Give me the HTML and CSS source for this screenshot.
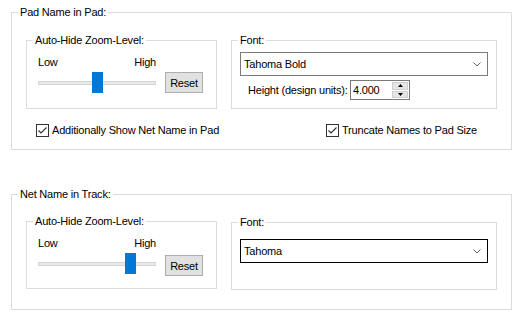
FILE: index.html
```html
<!DOCTYPE html>
<html lang="en">
<head>
    <meta charset="UTF-8">
    <title>Net Name Options</title>
    <link rel="stylesheet" href="styles.css">
</head>
<body>
    <fieldset class="group group-pad">
        <legend>Pad Name in Pad:</legend>
        <div class="group-row">
            <fieldset class="sub zoom">
                <legend>Auto-Hide Zoom-Level:</legend>
                <div class="zoom-body">
                    <div class="slider">
                        <div class="slider-labels"><span>Low</span><span>High</span></div>
                        <div class="slider-area">
                            <div class="track"></div>
                            <div class="thumb" style="left: 54px;"></div>
                        </div>
                    </div>
                    <button class="btn">Reset</button>
                </div>
            </fieldset>
            <fieldset class="sub font">
                <legend>Font:</legend>
                <div class="combo">
                    <span>Tahoma Bold</span>
                    <svg class="chevron" width="8" height="5" viewBox="0 0 8 5"><polyline points="0.5,0.5 4,4 7.5,0.5" fill="none" stroke="#606060" stroke-width="1"/></svg>
                </div>
                <div class="height-row">
                    <label>Height (design units):</label>
                    <div class="spin">
                        <span class="spin-value">4.000</span>
                        <div class="spin-btns">
                            <span class="spin-btn"><svg width="5" height="3" viewBox="0 0 5 3"><polygon points="2.5,0 5,3 0,3" fill="#000"/></svg></span>
                            <span class="spin-btn"><svg width="5" height="3" viewBox="0 0 5 3"><polygon points="0,0 5,0 2.5,3" fill="#000"/></svg></span>
                        </div>
                    </div>
                </div>
            </fieldset>
        </div>
        <div class="check-row">
            <label class="check">
                <span class="box"><svg width="11" height="11" viewBox="0 0 11 11"><polyline points="1.5,5.5 4,8 9.5,2.5" fill="none" stroke="#333" stroke-width="1.2"/></svg></span>
                Additionally Show Net Name in Pad
            </label>
            <label class="check">
                <span class="box"><svg width="11" height="11" viewBox="0 0 11 11"><polyline points="1.5,5.5 4,8 9.5,2.5" fill="none" stroke="#333" stroke-width="1.2"/></svg></span>
                Truncate Names to Pad Size
            </label>
        </div>
    </fieldset>

    <fieldset class="group group-track">
        <legend>Net Name in Track:</legend>
        <div class="group-row">
            <fieldset class="sub zoom">
                <legend>Auto-Hide Zoom-Level:</legend>
                <div class="zoom-body">
                    <div class="slider">
                        <div class="slider-labels"><span>Low</span><span>High</span></div>
                        <div class="slider-area">
                            <div class="track"></div>
                            <div class="thumb" style="left: 87px;"></div>
                        </div>
                    </div>
                    <button class="btn">Reset</button>
                </div>
            </fieldset>
            <fieldset class="sub font">
                <legend>Font:</legend>
                <div class="combo focused">
                    <span>Tahoma</span>
                    <svg class="chevron" width="8" height="5" viewBox="0 0 8 5"><polyline points="0.5,0.5 4,4 7.5,0.5" fill="none" stroke="#606060" stroke-width="1"/></svg>
                </div>
            </fieldset>
        </div>
    </fieldset>
</body>
</html>
```

FILE: styles.css
```css
body {
    margin: 0;
    padding-top: 6px;
    background-color: #fff;
    color: #000;
    font-family: "Liberation Sans", Arial, sans-serif;
    font-size: 11px;
    line-height: 13px;
    letter-spacing: -0.2px;
}
fieldset {
    margin: 0;
    padding: 0;
    min-inline-size: 0;
    border: 1px solid #dcdcdc;
}
legend {
    margin-left: 6px;
    padding: 0 2px;
    line-height: 13px;
}
.group {
    margin-left: 11px;
    width: 501px;
    box-sizing: border-box;
}
.group-row {
    display: flex;
    align-items: flex-start;
    gap: 14px;
    padding: 0 14px;
}
.group-pad .group-row {
    padding-top: 15px;
}
.group-track {
    margin-top: 38px;
}
.group-track .group-row {
    padding-top: 14px;
    padding-bottom: 19px;
}

/* Auto-hide zoom level */
.sub.zoom {
    width: 191px;
    box-sizing: border-box;
    padding: 9px 13px 15px 11px;
}
.sub.zoom legend {
    margin-left: -5px; /* legend sits at the padding edge */
}
.group-track .sub.zoom {
    padding-bottom: 14px;
}
.zoom-body {
    display: flex;
    align-items: flex-end;
}
.slider {
    width: 118px;
}
.slider-labels {
    display: flex;
    justify-content: space-between;
}
.slider-area {
    position: relative;
    height: 21px;
    margin-top: 3px;
}
.track {
    position: relative;
    top: 9px;
    height: 2px;
    border: 1px solid #d6d6d6;
    background-color: #e7eaea;
}
.thumb {
    position: absolute;
    top: 0;
    width: 11px;
    height: 21px;
    background-color: #0078d7;
}
.btn {
    width: 38px;
    height: 21px;
    margin-left: 9px;
    padding: 0;
    border: 1px solid #adadad;
    background-color: #e1e1e1;
    font-family: inherit;
    font-size: 11px;
    letter-spacing: -0.2px;
    color: #000;
}
.group-track .btn {
    margin-bottom: -2px;
}

/* Font box */
.sub.font {
    width: 266px;
    box-sizing: border-box;
    padding: 5px 8px 8px 8px;
}
.sub.font legend {
    margin-left: -2px;
}
.group-track .sub.font {
    margin-top: 1px;
    padding-top: 10px;
    padding-bottom: 26px;
}
.combo {
    display: flex;
    align-items: center;
    justify-content: space-between;
    height: 24px;
    box-sizing: border-box;
    padding: 0 6px 0 3px;
    border: 1px solid #7a7a7a;
    background-color: #fff;
}
.combo.focused {
    border-color: #000;
}
.chevron {
    margin-top: 1px;
}
.height-row {
    display: flex;
    align-items: center;
    margin-top: 4px;
    padding-left: 8px;
}
.height-row label {
    width: 102px;
}
.spin {
    display: flex;
    align-items: stretch;
    width: 60px;
    height: 20px;
    box-sizing: border-box;
    border: 1px solid #7a7a7a;
    background-color: #fff;
}
.spin-value {
    flex: 1;
    padding-left: 2px;
    line-height: 18px;
}
.spin-btns {
    display: flex;
    flex-direction: column;
    width: 16px;
    padding: 1px 1px 1px 0;
    gap: 1px;
}
.spin-btn {
    flex: 1;
    display: flex;
    align-items: center;
    justify-content: center;
    background-color: #e5e5e5;
    border: 1px solid #cfcfcf;
}

/* Checkboxes */
.check-row {
    display: grid;
    grid-template-columns: 290px 1fr;
    margin-top: 15px;
    padding: 0 14px 12px 24px;
}
.check {
    display: flex;
    align-items: center;
    height: 13px;
}
.box {
    display: flex;
    align-items: center;
    justify-content: center;
    width: 13px;
    height: 13px;
    box-sizing: border-box;
    margin-right: 3px;
    border: 1px solid #333;
    background-color: #fff;
}
```
